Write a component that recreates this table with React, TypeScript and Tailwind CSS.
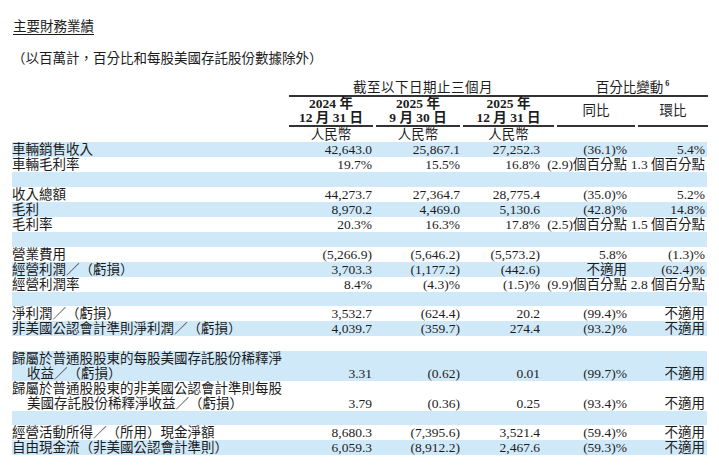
import React from 'react'

type Row = {
  label?: string | string[]
  values?: string[]
  h?: string
}

const rows: Row[] = [
  { label: '車輛銷售收入', values: ['42,643.0', '25,867.1', '27,252.3', '(36.1)%', '5.4%'] },
  { label: '車輛毛利率', values: ['19.7%', '15.5%', '16.8%', '(2.9)個百分點', '1.3 個百分點'] },
  {},
  { label: '收入總額', values: ['44,273.7', '27,364.7', '28,775.4', '(35.0)%', '5.2%'] },
  { label: '毛利', values: ['8,970.2', '4,469.0', '5,130.6', '(42.8)%', '14.8%'] },
  { label: '毛利率', values: ['20.3%', '16.3%', '17.8%', '(2.5)個百分點', '1.5 個百分點'] },
  {},
  { label: '營業費用', values: ['(5,266.9)', '(5,646.2)', '(5,573.2)', '5.8%', '(1.3)%'] },
  { label: '經營利潤／（虧損）', values: ['3,703.3', '(1,177.2)', '(442.6)', '不適用', '(62.4)%'] },
  { label: '經營利潤率', values: ['8.4%', '(4.3)%', '(1.5)%', '(9.9)個百分點', '2.8 個百分點'] },
  { h: 'h-[14px]' },
  { label: '淨利潤／（虧損）', values: ['3,532.7', '(624.4)', '20.2', '(99.4)%', '不適用'] },
  { label: '非美國公認會計準則淨利潤／（虧損）', values: ['4,039.7', '(359.7)', '274.4', '(93.2)%', '不適用'] },
  {},
  {
    label: ['歸屬於普通股股東的每股美國存託股份稀釋淨', '收益／（虧損）'],
    values: ['3.31', '(0.62)', '0.01', '(99.7)%', '不適用'],
  },
  {
    label: ['歸屬於普通股股東的非美國公認會計準則每股', '美國存託股份稀釋淨收益／（虧損）'],
    values: ['3.79', '(0.36)', '0.25', '(93.4)%', '不適用'],
  },
  { h: 'h-[14px]' },
  { label: '經營活動所得／（所用）現金淨額', values: ['8,680.3', '(7,395.6)', '3,521.4', '(59.4)%', '不適用'] },
  { label: '自由現金流（非美國公認會計準則）', values: ['6,059.3', '(8,912.2)', '2,467.6', '(59.3)%', '不適用'] },
]

// column tracks follow the header rules; pr puts the figures where the report has them
const cols = [
  { w: 'w-[87px]', pr: 'pr-[4px]', line: 'mr-[3px]' },
  { w: 'w-[87px]', pr: 'pr-[3px]', line: 'mr-[3px]' },
  { w: 'w-[94px]', pr: 'pr-[17px]', line: 'mr-[3px]' },
  { w: 'w-[81px]', pr: 'pr-[11px]', line: 'mr-[3px]' },
  { w: 'w-[70px]', pr: 'pr-[3px]', line: '' },
]

const font = { fontFamily: '"Liberation Serif", "Noto Sans CJK TC", serif' }

function BodyRow({ row, index }: { row: Row; index: number }) {
  const bg = index % 2 === 0 ? 'bg-[#d0e9f9]' : 'bg-white'
  const multi = Array.isArray(row.label)
  const height = row.h ?? (multi ? 'h-[30px]' : 'h-[15px]')

  return (
    <div className={`flex ${height} ${bg} leading-[15px]`}>
      <div className="w-[277px] shrink-0 whitespace-nowrap">
        {multi ? (
          <>
            <div>{(row.label as string[])[0]}</div>
            <div className="pl-[15px]">{(row.label as string[])[1]}</div>
          </>
        ) : (
          row.label
        )}
      </div>
      {row.values &&
        row.values.map((v, i) => (
          <div
            key={i}
            className={`${cols[i].w} ${cols[i].pr} shrink-0 flex items-end justify-end whitespace-nowrap`}
          >
            {v}
          </div>
        ))}
    </div>
  )
}

export default function App() {
  return (
    <div className="w-[719px] h-[471px] bg-white text-[#1c1c1c] overflow-hidden" style={font}>
      <div className="px-[12px] pt-[19px]">
        <div className="text-[13.5px] leading-[16px] pl-[1px]">
          <span className="underline underline-offset-[3px] decoration-1">主要財務業績</span>
        </div>
        <div className="mt-[16px] text-[13.5px] leading-[16px]">
          （以百萬計，百分比和每股美國存託股份數據除外）
        </div>

        {/* header */}
        <div className="mt-[13px] font-bold text-[13.5px]">
          <div className="flex">
            <div className="w-[277px] shrink-0" />
            <div className="flex h-[17px] border-b-2 border-[#333] leading-[15px]">
              <div className="w-[268px] text-center font-normal tracking-[0.5px]">截至以下日期止三個月</div>
              <div className="w-[151px] flex justify-center font-normal">
                <span>百分比變動</span>
                <span className="text-[8px] leading-[8px] ml-[2px] font-bold">6</span>
              </div>
            </div>
          </div>
          <div className="flex">
            <div className="w-[277px] shrink-0" />
            {[
              ['2024 年', '12 月 31 日'],
              ['2025 年', '9 月 30 日'],
              ['2025 年', '12 月 31 日'],
            ].map((d, i) => (
              <div key={i} className={`${cols[i].w} shrink-0`}>
                <div className={`${cols[i].line} border-b-2 border-[#333] text-center leading-[14px]`}>
                  <div>{d[0]}</div>
                  <div>{d[1]}</div>
                </div>
              </div>
            ))}
            {['同比', '環比'].map((t, j) => (
              <div key={t} className={`${cols[j + 3].w} shrink-0`}>
                <div className={`${cols[j + 3].line} h-[30px] border-b-2 border-[#333] flex items-center justify-center font-normal`}>
                  {t}
                </div>
              </div>
            ))}
          </div>
          <div className="flex leading-[15px] font-normal">
            <div className="w-[277px] shrink-0" />
            {[0, 1, 2].map((i) => (
              <div key={i} className={`${cols[i].w} shrink-0`}>
                <div className={`${cols[i].line} text-center`}>人民幣</div>
              </div>
            ))}
          </div>
        </div>

        {/* body */}
        <div className="text-[13.5px]">
          {rows.map((row, i) => (
            <BodyRow key={i} row={row} index={i} />
          ))}
        </div>
      </div>
    </div>
  )
}
